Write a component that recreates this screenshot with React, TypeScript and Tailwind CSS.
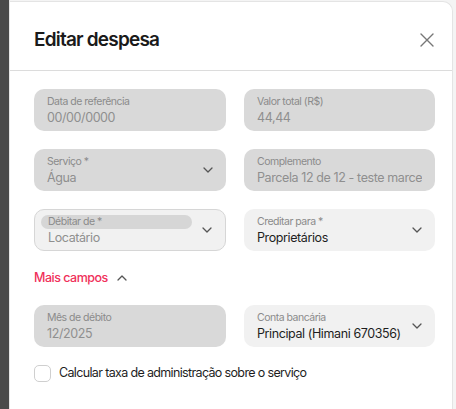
import React from "react";

const Chevron = ({ up = false }: { up?: boolean }) => (
  <svg width="10" height="6" viewBox="0 0 10 6" fill="none" className={up ? "rotate-180" : ""}>
    <path d="M1 1l4 4 4-4" stroke="#555" strokeWidth="1.3" strokeLinecap="round" strokeLinejoin="round" />
  </svg>
);

function Field({
  label,
  value,
  disabled,
  select,
  dark,
  bordered,
  pill,
}: {
  label: string;
  value: string;
  disabled?: boolean;
  select?: boolean;
  dark?: boolean;
  bordered?: boolean;
  pill?: boolean;
}) {
  return (
    <div
      className={
        "h-[42px] rounded-[10px] flex items-center pr-[13px] overflow-hidden " +
        (disabled ? "bg-[#d9d9d9] " : "bg-[#f1f1f1] ") +
        (bordered ? "border border-[#d6d6d6] " : "")
      }
    >
      <div className="flex-1 min-w-0 flex flex-col pl-[13px] pt-[1px]">
        {pill ? (
          <div className="-ml-[7px] pl-[7px] bg-[#d6d6d6] rounded-full w-[151px] h-[14px] text-[10.5px] leading-[14px] text-[#8b8b8b] tracking-[-0.5px]">
            {label}
          </div>
        ) : (
          <div className="text-[10.5px] leading-[14px] text-[#8b8b8b] tracking-[-0.5px]">{label}</div>
        )}
        <div
          className={
            "text-[12.5px] leading-[18px] tracking-[-0.4px] whitespace-nowrap overflow-hidden " +
            (dark ? "text-[#1e1e1e]" : "text-[#8f8f8f]")
          }
        >
          {value}
        </div>
      </div>
      {select && (
        <div className="ml-[6px] flex items-center">
          <Chevron />
        </div>
      )}
    </div>
  );
}

export default function App() {
  return (
    <div
      className="w-[456px] h-[409px] bg-[#f4f4f4] flex"
      style={{ fontFamily: "Inter, 'Noto Sans', sans-serif" }}
    >
      <div className="w-[9px] h-full bg-[#4a4a4a]" />
      <div className="w-[1px] h-full bg-[#e6e6e6]" />
      <div className="w-[443px] h-[409px] mt-[1px] bg-white rounded-tr-[10px] border-t border-r border-[#e4e4e4] flex flex-col">
        <div className="h-[69px] pt-[8px] flex items-center justify-between pl-[24px] pr-[18px] border-b border-[#dcdcdc]">
          <div className="text-[19px] font-semibold text-[#1a1a1a] tracking-[-0.8px]">Editar despesa</div>
          <svg width="14" height="14" viewBox="0 0 14 14">
            <path d="M1 1l12 12M13 1L1 13" stroke="#777" strokeWidth="1.4" strokeLinecap="round" />
          </svg>
        </div>
        <div className="pl-[24px] pr-[18px] pt-[18px] flex flex-col">
          <div className="grid grid-cols-[192px_191px] gap-x-[18px] gap-y-[18px]">
            <Field label="Data de referência" value="00/00/0000" disabled />
            <Field label="Valor total (R$)" value="44,44" disabled />
            <Field label="Serviço *" value="Água" disabled select />
            <Field label="Complemento" value="Parcela 12 de 12 -  teste marcelo" disabled />
            <Field label="Débitar de *" value="Locatário" select bordered pill />
            <Field label="Creditar para *" value="Proprietários" select dark />
          </div>
          <div className="h-[54px] flex items-center gap-[9px]">
            <span className="text-[12.5px] font-medium text-[#f0305a] tracking-[-0.5px]">Mais campos</span>
            <Chevron up />
          </div>
          <div className="grid grid-cols-[192px_191px] gap-x-[18px]">
            <Field label="Mês de débito" value="12/2025" disabled />
            <Field label="Conta bancária" value="Principal (Himani 670356)" select dark />
          </div>
          <div className="flex items-center gap-[8px] mt-[17px]">
            <div className="w-[17px] h-[17px] rounded-[5px] border border-[#cfcfcf] bg-white" />
            <span className="text-[12.5px] text-[#1e1e1e] tracking-[-0.65px]">Calcular taxa de administração sobre o serviço</span>
          </div>
        </div>
      </div>
    </div>
  );
}
